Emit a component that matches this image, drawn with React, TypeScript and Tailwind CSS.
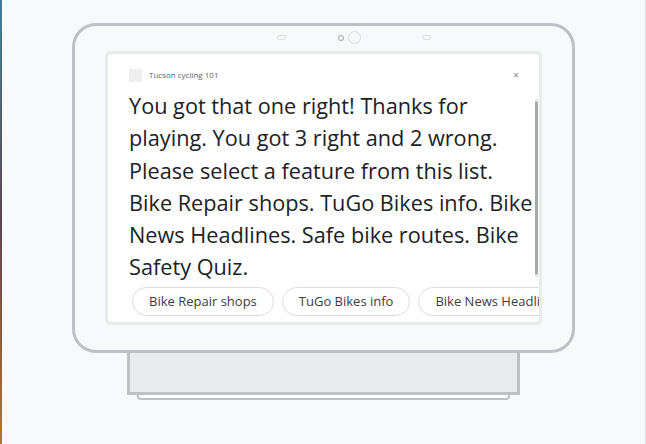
const chips = ['Bike Repair shops', 'TuGo Bikes info', 'Bike News Headlines', 'Safe bike routes', 'Bike Safety Quiz']

const message =
  'You got that one right! Thanks for playing. You got 3 right and 2 wrong. Please select a feature from this list. Bike Repair shops. TuGo Bikes info. Bike News Headlines. Safe bike routes. Bike Safety Quiz.'

// Sensores de la parte superior del marco
function Sensors() {
  return (
    <div className="relative h-[25px]">
      <div className="absolute left-[172px] top-[9px] w-[9px] h-[5px] rounded-full border border-[#dadce0]" />
      <div className="absolute left-[233px] top-[9px] w-[6px] h-[6px] rounded-full border-[1.5px] border-[#9aa0a6]" />
      <div className="absolute left-[243px] top-[5px] w-[13px] h-[13px] rounded-full border-[1.5px] border-[#dadce0]" />
      <div className="absolute left-[317px] top-[9px] w-[9px] h-[5px] rounded-full border border-[#dadce0]" />
    </div>
  )
}

export default function App() {
  return (
    <div className="relative w-[646px] h-[444px] bg-[#f8f9fa] overflow-hidden font-['Open_Sans',sans-serif]">
      {/* Borde izquierdo (otra ventana) */}
      <div className="absolute left-0 top-0 w-[2px] h-full bg-gradient-to-b from-[#3f7f93] via-[#5a4550] to-[#b8741f]" />
      <div className="absolute right-0 top-0 w-[1px] h-full bg-[#dadce0]" />

      <div className="pt-[23px] pl-[72px]">
        {/* Marco */}
        <div className="w-[503px] h-[330px] border-[3px] border-[#bdc1c6] rounded-[24px] px-[30px]">
          <Sensors />
          <div className="h-[274px] border-[3px] border-[#e8eaed] rounded-[6px] bg-white flex flex-col">
            <div className="flex items-center h-[30px] mt-[6px] pl-[21px] pr-[20px]">
              <div className="w-[13px] h-[13px] bg-[#eeeeee]" />
              <span className="ml-[7px] text-[8px] text-[#5f6368]">Tucson cycling 101</span>
              <span className="ml-auto text-[10px] text-[#80868b]">×</span>
            </div>
            <div className="flex flex-1 min-h-0">
              <p className="pl-[21px] w-[426px] text-[21.7px] leading-[32.3px] text-[#202124]">
                {message}
              </p>
              <div className="mt-[9px] ml-[1px] w-[3px] h-[178px] bg-[#a8a8a8] border-y-[3px] border-[#e0e0e0]" />
            </div>
            <div className="flex gap-[8px] pl-[24px] pb-[6px] overflow-hidden">
              {chips.map((c) => (
                <div
                  key={c}
                  className="shrink-0 h-[29px] px-[16px] flex items-center rounded-full border border-[#dadce0] text-[13px] text-[#3c4043]"
                >
                  {c}
                </div>
              ))}
            </div>
          </div>
        </div>
        {/* Base */}
        <div className="ml-[55px] w-[393px] h-[42px] border-[3px] border-t-0 border-[#bdc1c6] bg-[#e8eaed]" />
        <div className="ml-[65px] w-[373px] h-[5px] border-2 border-t-0 border-[#bdc1c6] rounded-b-[4px] bg-white" />
      </div>
    </div>
  )
}
